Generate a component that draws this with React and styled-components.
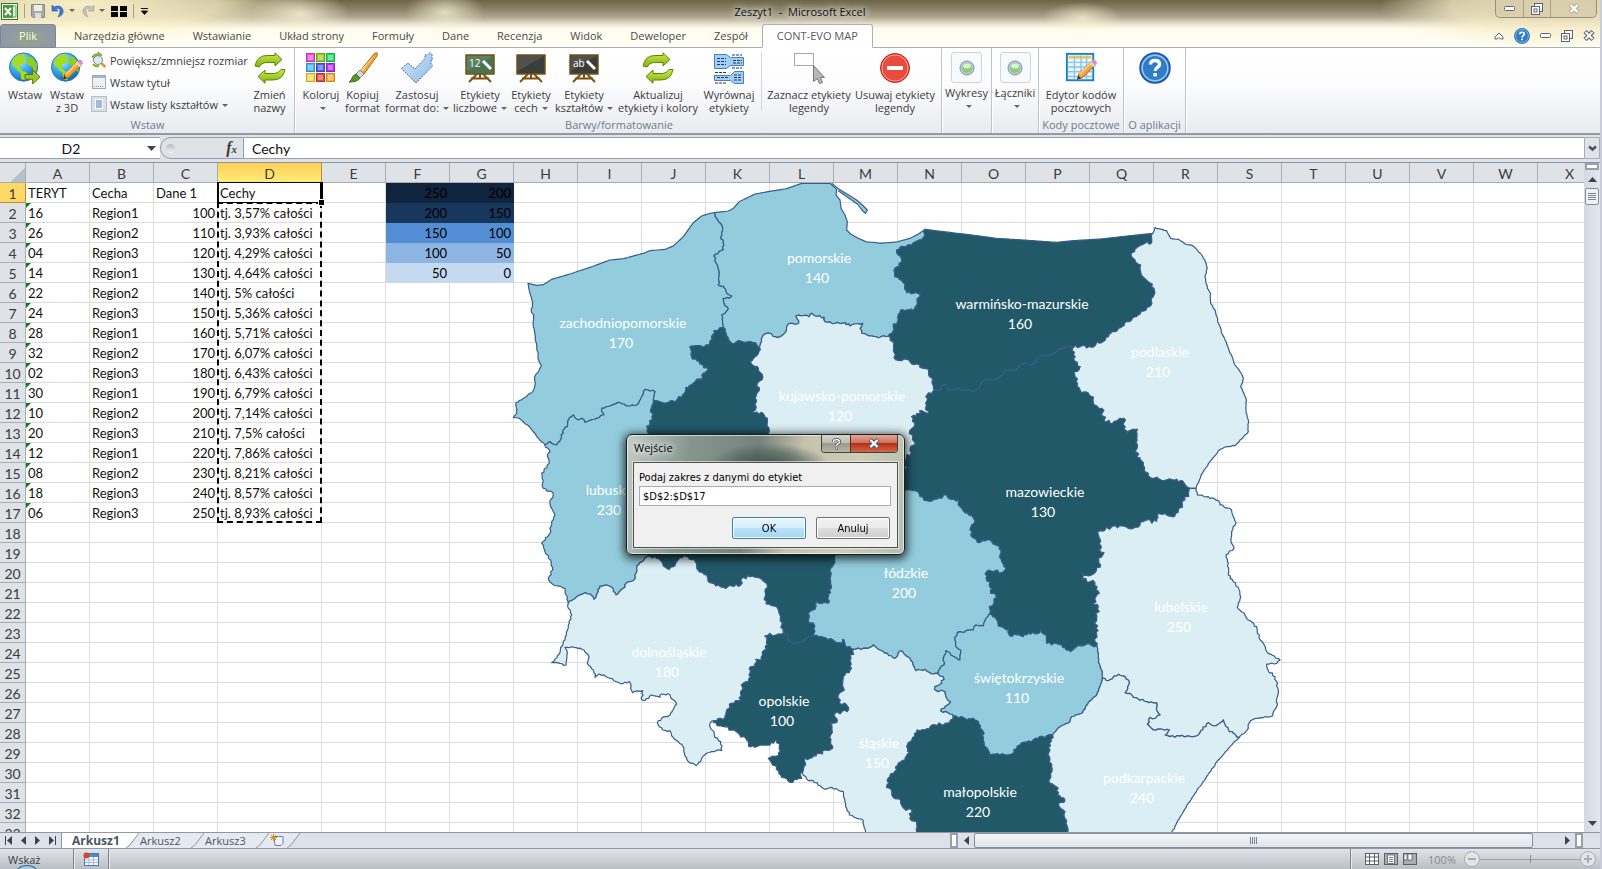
import React, { useState } from 'react';
import styled, { createGlobalStyle } from 'styled-components';

const GlobalStyle = createGlobalStyle`
  * {
    box-sizing: border-box;
  }

  body {
    margin: 0;
    overflow: hidden;
    font-family: 'Open Sans', 'Noto Sans', sans-serif;
    font-size: 11px;
    color: #3b3b3b;
  }

  button, input {
    font: inherit;
    color: inherit;
    margin: 0;
    padding: 0;
    border: 0;
    background: none;
  }
`;

const Window = styled.div`
  position: relative;
  display: flex;
  flex-direction: column;
  height: 100vh;
  overflow: hidden;
  border-right: 2px solid #c9cbd8;
  background: #dce1e8;
`;

/* ---------- title bar and tabs ---------- */

const Glass = styled.header`
  background:
    radial-gradient(ellipse 230px 40px at 80px 4px, rgba(255, 246, 205, 0.95), rgba(255, 246, 205, 0.7) 60%, transparent),
    radial-gradient(ellipse 50px 22px at 300px 14px, rgba(255, 247, 218, 0.8), transparent),
    radial-gradient(ellipse 40px 22px at 445px 12px, rgba(255, 250, 225, 0.7), transparent),
    radial-gradient(ellipse 40px 16px at 1082px 18px, rgba(255, 247, 215, 0.7), transparent),
    radial-gradient(ellipse 180px 44px at 1560px 6px, rgba(238, 226, 184, 0.95), rgba(246, 236, 200, 0.75) 60%, transparent),
    linear-gradient(#6d6548, #8c8469 20%, #aba58f 35%, #e8e2cb 50%, #fffbee 60%, #fffff6);
`;

const TitleBar = styled.div`
  display: grid;
  grid-template-columns: 1fr auto 1fr;
  height: 24px;
`;

const QuickAccess = styled.div`
  display: flex;
  align-items: center;
  gap: 6px;
  padding: 0 0 2px 1px;
`;

const QuickButton = styled.button`
  display: flex;
  align-items: center;
`;

const QuickDivider = styled.span`
  width: 1px;
  height: 14px;
  background: #a5a08c;
`;

const WindowTitle = styled.h1`
  margin: 0;
  font-size: 11px;
  font-weight: 400;
  line-height: 24px;
  color: #111;
  white-space: pre;
  text-shadow: 0 0 6px #fff, 0 0 8px #fff;
`;

const CaptionButtons = styled.div`
  display: flex;
  justify-self: end;
  height: 18px;
  margin-right: 3px;
  border: 1px solid #98907a;
  border-top: 0;
  border-radius: 0 0 5px 5px;
  background: rgba(214, 203, 170, 0.7);
`;

const CaptionButton = styled.button`
  display: flex;
  align-items: center;
  justify-content: center;
  width: ${(p) => (p.$wide ? '46px' : '27px')};

  & + & {
    border-left: 1px solid #a8a08a;
  }
`;

const TabRow = styled.div`
  display: flex;
  height: 24px;
  border-bottom: 1px solid #a9afb7;
`;

const FileTab = styled.button`
  width: 56px;
  height: 24px;
  margin-right: 4px;
  padding-bottom: 2px;
  border: 1px solid #7d8795;
  border-radius: 3px 3px 0 0;
  background: radial-gradient(ellipse at 50% 60%, #9ba78f, #8f9aa4 60%, #8e98a8);
  color: #fff;
  text-shadow: 0 0 4px #6f9a2c;
`;

const Tab = styled.button`
  height: 24px;
  padding: 0 14px 2px;
  color: #4a4a4a;
  white-space: nowrap;
  ${(p) => p.$active && `
    border: 1px solid #a9afb7;
    border-bottom-color: #fff;
    border-radius: 3px 3px 0 0;
    background: #fff;
    color: #555b64;
  `}
`;

const TabTools = styled.div`
  display: flex;
  align-items: center;
  gap: 10px;
  margin-left: auto;
  padding-right: 5px;
`;

/* ---------- ribbon ---------- */

const Ribbon = styled.section`
  display: flex;
  height: 87px;
  background: linear-gradient(#fff, #fdfdfe 40%, #e8ebef);
  border-bottom: 2px solid #949aa1;
`;

const Group = styled.div`
  display: flex;
  flex-direction: column;
  padding: ${(p) => p.$pad || '0'};
  border-right: 1px solid #c0c4c9;
  box-shadow: 1px 0 0 #fff;
`;

const GroupBody = styled.div`
  display: flex;
  flex: 1;
  padding-top: 4px;
`;

const GroupName = styled.div`
  height: 17px;
  line-height: 17px;
  text-align: center;
  white-space: nowrap;
  color: #727b89;
`;

const GroupSplit = styled.span`
  width: 1px;
  height: 58px;
  margin: 0 4px;
  background: #d3d7dc;
`;

const BigButton = styled.button`
  display: flex;
  flex-direction: column;
  align-items: center;
  gap: ${(p) => (p.$boxed ? '3px' : '4px')};
  width: ${(p) => p.$w}px;
  line-height: 13px;
  white-space: nowrap;
  text-align: center;
`;

const ButtonText = styled.span`
  display: block;
`;

const SmallColumn = styled.div`
  display: flex;
  flex-direction: column;
  width: 160px;
  margin-top: -3px;
`;

const SmallButton = styled.button`
  display: flex;
  align-items: center;
  gap: 3px;
  height: 22px;
  padding-left: 3px;
  white-space: nowrap;
`;

const Caret = styled.i`
  display: inline-block;
  margin: 0 0 2px 4px;
  border: 3px solid transparent;
  border-top-color: #666;
  border-bottom: 0;
`;

const IconBox = styled.span`
  display: flex;
  align-items: center;
  justify-content: center;
  width: 31px;
  height: 31px;
  border: 1px solid #d0d4d8;
  border-radius: 3px;
  background: #f8f9fb;
`;

/* ---------- formula bar ---------- */

const FormulaBar = styled.div`
  display: flex;
  height: 28px;
  padding: 2px 0 3px;
  background: #dce3ec;
  border-bottom: 1px solid #8f959c;
`;

const NameBox = styled.input`
  width: 142px;
  height: 22px;
  border: 1px solid #979da4;
  border-width: 1px 0;
  background: #fff;
  font-family: Lato, sans-serif;
  font-size: 14px;
  text-align: center;
  color: #111;
`;

const NameArrow = styled.button`
  width: 18px;
  height: 22px;
  border: 1px solid #979da4;
  border-width: 1px 0;
  background: #fff;
`;

const FunctionArea = styled.div`
  display: flex;
  align-items: center;
  justify-content: space-between;
  width: 84px;
  height: 22px;
  padding: 0 6px 0 5px;
  border: 1px solid #979da4;
  border-radius: 11px 0 0 11px;
  background: #dfe3e8;
`;

const Knob = styled.span`
  width: 9px;
  height: 9px;
  border-radius: 50%;
  background: linear-gradient(#b5b9be, #f2f3f5);
`;

const FxButton = styled.button`
  font-family: 'Liberation Serif', serif;
  font-size: 16px;
  font-style: italic;
  font-weight: 700;
  line-height: 16px;

  small {
    font-size: 11px;
  }
`;

const FormulaInput = styled.input`
  flex: 1;
  height: 22px;
  padding-left: 8px;
  border: 1px solid #979da4;
  border-width: 1px 0;
  background: #fff;
  font-family: Lato, sans-serif;
  font-size: 14px;
  color: #111;
`;

const ExpandButton = styled.button`
  display: flex;
  align-items: center;
  justify-content: center;
  width: 16px;
  height: 22px;
  border: 1px solid #a9afb5;
  background: #dfe3e8;
`;

/* ---------- sheet ---------- */

const Workspace = styled.main`
  display: flex;
  flex: 1;
  min-height: 0;
`;

const Viewport = styled.div`
  position: relative;
  flex: 1;
  overflow: hidden;
  background: #fff;
`;

const Grid = styled.table`
  width: 1602px;
  table-layout: fixed;
  border-collapse: separate;
  border-spacing: 0;
  font-family: Lato, sans-serif;
  font-size: 13px;
  line-height: 17px;
  color: #111;

  th, td {
    height: 20px;
    padding: 2px 2px 0;
    white-space: nowrap;
    border: 0 solid #dadcdd;
    border-width: 0 1px 1px 0;
  }
`;

const ColHead = styled.th`
  && {
    border-color: ${(p) => (p.$active ? '#c28a30' : '#a8adb4')};
  }
  background: ${(p) => (p.$active ? 'linear-gradient(#ffcf57, #ffec78)' : '#dfe3e8')};
  font-size: 14px;
  font-weight: 400;
  color: #3b3b3b;
`;

const RowHead = styled(ColHead)`
  background: ${(p) => (p.$active ? '#ffd966' : '#dfe3e8')};
`;

const Corner = styled(ColHead)`
  background: linear-gradient(135deg, #dfe3e8 66%, #b9bfc6 66%);
`;

const Cell = styled.td`
  position: relative;
  text-align: ${(p) => (p.$right ? 'right' : 'left')};

  ${(p) => p.$fill && `
    && { border-color: ${p.$fill}; }
    background: ${p.$fill};
    color: #000;
  `}

  ${(p) => p.$flag && `
    &::before {
      content: '';
      position: absolute;
      top: 0;
      left: 0;
      border: 5px solid #0a7d1c;
      border-width: 5px 5px 0 0;
      border-right-color: transparent;
    }
  `}
`;

const ActiveCell = styled.div`
  position: absolute;
  left: 217px;
  top: 19px;
  width: 106px;
  height: 21px;
  border: solid #000;
  border-width: 1px 3px 1px 2px;

  &::after {
    content: '';
    position: absolute;
    right: -4px;
    bottom: -3px;
    width: 5px;
    height: 5px;
    background: #000;
    outline: 1px solid #fff;
  }
`;

const CopyRange = styled.div`
  position: absolute;
  left: 217px;
  top: 39px;
  width: 105px;
  height: 321px;
  border: 2px dashed #000;
`;

const MapLayer = styled.svg`
  position: absolute;
  left: 500px;
  top: 20px;
  font-family: Lato, sans-serif;
  font-size: 14px;
`;

const VerticalBar = styled.div`
  display: flex;
  flex-direction: column;
  align-items: center;
  width: 16px;
  background: linear-gradient(90deg, #d3d9e4, #e3e7ee);
`;

const SplitGrip = styled.span`
  width: ${(p) => (p.$upright ? '8px' : '14px')};
  height: ${(p) => (p.$upright ? '15px' : '7px')};
  border: 2px solid #9a9fa8;
  background: #fff;
`;

const ArrowButton = styled.button`
  display: flex;
  align-items: center;
  justify-content: center;
  width: 16px;
  height: 18px;
  ${(p) => p.$bottom && 'margin-top: auto;'}
`;

const VerticalThumb = styled.button`
  display: flex;
  align-items: center;
  justify-content: center;
  width: 14px;
  height: 17px;
  border: 1px solid #868e99;
  border-radius: 2px;
  background: #eef1f6;
`;

/* ---------- bottom bars ---------- */

const SheetBar = styled.nav`
  display: flex;
  height: 17px;
  border-top: 1px solid #8f98a4;
  border-bottom: 1px solid #8f98a4;
  background: #dce1ea;
`;

const NavButtons = styled.div`
  display: flex;
  align-items: center;
  justify-content: space-between;
  width: 62px;
  padding: 0 5px;
  border-right: 1px solid #8f98a4;
`;

const SheetTab = styled.button`
  width: ${(p) => (p.$active ? '64px' : '51px')};
  padding-left: ${(p) => (p.$active ? '10px' : '0')};
  background: ${(p) => (p.$active ? '#fff' : '#e6eaf0')};
  font-size: ${(p) => (p.$active ? '12px' : '11px')};
  font-weight: ${(p) => (p.$active ? 700 : 400)};
  line-height: 15px;
  text-align: left;
  color: #4b5563;
`;

const NewSheet = styled.button`
  display: flex;
  align-items: center;
  width: 17px;
  background: #e6eaf0;
`;

const HorizontalBar = styled.div`
  display: flex;
  flex: 0 1 650px;
  align-items: center;
  margin-left: auto;
  padding-right: 17px;
`;

const HorizontalThumb = styled.button`
  display: flex;
  align-items: center;
  justify-content: center;
  flex: 1;
  height: 15px;
  border: 1px solid #868e99;
  border-radius: 2px;
  background: linear-gradient(#f3f5f8, #dfe3ea);
`;

const HorizontalRest = styled.span`
  width: 26px;
`;

const StatusBar = styled.footer`
  position: relative;
  display: flex;
  align-items: center;
  height: 20px;
  padding: 0 4px 0 8px;
  background: linear-gradient(#e1e4e8, #babfc5);
`;

const StatusDivider = styled.span`
  width: 1px;
  height: 20px;
  margin: 0 9px;
  background: #7e848b;
  box-shadow: 1px 0 0 #e8eaed;
`;

const StatusText = styled.span`
  width: 56px;
`;

const StatusRight = styled.div`
  display: flex;
  align-items: center;
  gap: 5px;
  margin-left: auto;
`;

const Percent = styled.span`
  margin: 0 3px 0 6px;
  color: #868b91;
`;

const RoundButton = styled.button`
  display: flex;
  align-items: center;
  justify-content: center;
  width: 16px;
  height: 16px;
  border: 1px solid #a9adb2;
  border-radius: 50%;
  background: #e2e4e7;
`;

const ZoomControl = styled.div`
  display: flex;
  align-items: center;
`;

const ZoomSlider = styled.input`
  appearance: none;
  width: 100px;
  height: 16px;
  background: linear-gradient(#9aa1aa, #9aa1aa) center / 100% 1px no-repeat;

  &::-webkit-slider-thumb {
    appearance: none;
    width: 1px;
    height: 8px;
    background: #8a919b;
  }
`;

const StartOrb = styled.span`
  position: absolute;
  left: 14px;
  bottom: -18px;
  width: 26px;
  height: 22px;
  border: 1px solid #2f6f93;
  border-radius: 50%;
  background: #a9cfe0;
`;

/* ---------- dialog ---------- */

const Dialog = styled.form`
  position: absolute;
  left: 626px;
  top: 434px;
  width: 279px;
  padding: 0 6px 6px;
  border: 1px solid #1b1f1e;
  border-radius: 6px;
  background:
    radial-gradient(ellipse 60px 22px at 142px 30px, #40524d, rgba(74, 92, 87, 0.6) 60%, transparent),
    linear-gradient(100deg, #c3cdc6, #87958f 22%, #75837d 45%, #c5c3ac 60%, #cfcdb8 80%, #b5beb0);
  box-shadow: inset 0 0 0 1px rgba(255, 255, 255, 0.6), 0 2px 10px 2px rgba(0, 0, 0, 0.75);
  font-family: 'DejaVu Sans Condensed', 'DejaVu Sans', sans-serif;
  font-size: 11px;
  color: #000;
`;

const DialogTitle = styled.div`
  display: flex;
  justify-content: space-between;
  height: 27px;
  line-height: 25px;
  padding-left: 1px;
  font-family: 'Open Sans', sans-serif;
  text-shadow: 0 0 6px #fff, 0 0 8px #fff;
`;

const DialogCaption = styled.div`
  display: flex;
  height: 18px;
  border: 1px solid #3e4541;
  border-top: 0;
  border-radius: 0 0 4px 4px;
  overflow: hidden;
`;

const DialogCaptionButton = styled.button`
  display: flex;
  align-items: center;
  justify-content: center;
  width: ${(p) => (p.$close ? '47px' : '28px')};
  border-left: ${(p) => (p.$close ? '1px solid #5a2a22' : '0')};
  background: ${(p) => (p.$close
    ? 'linear-gradient(#e2a595, #cf6f5c 48%, #b82f17 50%, #d0664a)'
    : 'linear-gradient(#d5d5c8, #bcbcae 48%, #9b9b8b 50%, #b7b6a4)')};
`;

const DialogBody = styled.div`
  padding: 8px 6px 8px 5px;
  border: 1px solid #4c5451;
  outline: 1px solid rgba(255, 255, 255, 0.55);
  background: #f0f0f0;
`;

const DialogLabel = styled.label`
  display: block;
  line-height: 14px;
  margin-bottom: 1px;
`;

const DialogInput = styled.input`
  width: 100%;
  height: 20px;
  padding-left: 3px;
  border: 1px solid #abadb3;
  background: #fff;
  outline: none;
`;

const DialogActions = styled.div`
  display: flex;
  justify-content: flex-end;
  gap: 10px;
  margin-top: 11px;
  padding-right: 1px;
`;

const DialogButton = styled.button`
  width: 74px;
  height: 22px;
  border: 1px solid ${(p) => (p.$primary ? '#3c7fb1' : '#707070')};
  border-radius: 2px;
  box-shadow: inset 0 0 0 1px #fbfdff;
  background: ${(p) => (p.$primary
    ? 'linear-gradient(#e9f6fd, #d5eefc 48%, #b8e2f9 50%, #a2d6f4)'
    : 'linear-gradient(#f2f2f2, #ebebeb 48%, #dddddd 50%, #cfcfcf)')};
`;

/* ---------- icons ---------- */

const Pencil = () => (
  <g>
    <path d="M13 29l2-6 13-13 4 4-13 13z" fill="#f7a032" stroke="#a8631a" />
    <path d="M15 23l13-13 1.5 1.5-13 13z" fill="#ffd08a" />
    <path d="M26 12l3-3 4 4-3 3z" fill="#d6d6d6" />
    <path d="M28 10l2-2q3 0 4 4l-2 2z" fill="#e08ab8" />
    <path d="M13 29l1-4 3 3z" fill="#333" />
  </g>
);

const GlobeIcon = ({ pencil }) => (
  <svg width="32" height="32" viewBox="0 0 34 34">
    <defs>
      <radialGradient id="sea" cx="35%" cy="25%" r="80%">
        <stop offset="0" stopColor="#c9f0ff" />
        <stop offset=".45" stopColor="#42b4ee" />
        <stop offset="1" stopColor="#0f62b4" />
      </radialGradient>
    </defs>
    <circle cx="15.500" cy="16" r="15" fill="url(#sea)" stroke="#2a78bd" />
    <path d="M3 11Q6 3 14 2l3 2-1 3 3 1-3 4-4 1-1 4 3 2-1 3-4-2-2-4-3-1z" fill="#a5dd1c" />
    <path d="M18 4l7 2 5 7-1 8-3-1-1-4-4-2-3-3 3-3z" fill="#8fd01a" />
    <path d="M12 20l6 1 2 3-3 6-4-1z" fill="#a5dd1c" />
    {pencil ? <Pencil /> : <path d="M17 24h8v-5l8 7.500-8 7.500v-5h-8z" fill="#9cc928" stroke="#54760f" />}
  </svg>
);

const SyncIcon = () => (
  <svg width="32" height="32" viewBox="0 0 32 32">
    <defs>
      <linearGradient id="leaf" x1="0" y1="0" x2="0" y2="1">
        <stop offset="0" stopColor="#cdea4a" />
        <stop offset="1" stopColor="#7fb20d" />
      </linearGradient>
    </defs>
    <g fill="url(#leaf)" stroke="#5b8209" strokeLinejoin="round">
      <path d="M1 14Q3 3 14 3.500h7V.8l7 6.700-7 6.500v-3.500h-7Q8 10 5 15z" />
      <path d="M31 17.500Q29 28.500 18 28h-7v3.200l-7-6.700 7-6.500v3.500h7q6 .5 9-4z" />
    </g>
  </svg>
);

const swatches = ['#f04fd8', '#8fd01a', '#22dd66', '#4ab6ff', '#4a63e8', '#b433f5', '#ffd84a', '#e8483a', '#ffac33'];

const SwatchIcon = () => (
  <svg width="32" height="32" viewBox="0 0 32 32">
    {swatches.map((c, i) => (
      <g key={c}>
        <rect x={1.5 + (i % 3) * 10} y={1.5 + Math.floor(i / 3) * 10} width="8" height="8" fill={c} stroke={c} />
        <rect x={1.5 + (i % 3) * 10} y={1.5 + Math.floor(i / 3) * 10} width="8" height="8" fill="none" stroke="#000" strokeOpacity=".22" />
        <rect x={3 + (i % 3) * 10} y={3 + Math.floor(i / 3) * 10} width="5" height="5" fill="#fff" fillOpacity=".35" />
      </g>
    ))}
  </svg>
);

const BrushIcon = () => (
  <svg width="32" height="32" viewBox="0 0 32 32">
    <path d="M30 1q1 1 0 3L17 22l-4-3L27 2q2-2 3-1z" fill="#f7a136" stroke="#b26a1b" />
    <path d="M28 3L14 18l1.500 1z" fill="#ffdca6" />
    <path d="M13 18l4 4-4 4-4-4z" fill="#d9d9d9" stroke="#888" />
    <path d="M9 22l4 4q-2 4-11 4 3-2 3-4 1-3 4-4z" fill="#5d9430" stroke="#3d6a18" />
  </svg>
);

const TickIcon = () => (
  <svg width="32" height="32" viewBox="0 0 32 32">
    <defs>
      <linearGradient id="tick" x1="0" y1="0" x2="1" y2="1">
        <stop offset="0" stopColor="#d3e7f8" />
        <stop offset="1" stopColor="#8dbbe6" />
      </linearGradient>
    </defs>
    <path d="M.5 16.500L7 11l7 6L24 6.500V2.500l2 1L29 .5l2 2v4l2 1-3 1v3l2 2L15 31z" fill="url(#tick)" stroke="#3f6ea3" strokeDasharray="2 1" />
  </svg>
);

const BoardIcon = ({ text, green }) => (
  <svg width="32" height="32" viewBox="0 0 32 32">
    <path d="M13 22L5 30M19 22l8 8M7 26.500h18M16 22v5" stroke="#7a5212" strokeWidth="2" fill="none" />
    <rect x="2" y="3" width="28" height="19" fill={green ? '#4a7351' : '#3b3d3c'} stroke="#7a5212" strokeWidth="1.500" />
    <path d="M3 4h26L3 19z" fill="#fff" fillOpacity=".1" />
    {text && <path d="M19 9l8 8" stroke="#fff" strokeWidth="3" />}
    {text && <text x="5" y="15" fontSize="10" fill="#fff">{text}</text>}
  </svg>
);

const AlignIcon = () => (
  <svg width="32" height="32" viewBox="0 0 32 32">
    <g fill="#9fd0f5" stroke="#4681b5">
      <path d="M1.500 2.500h12l4 3h13v8h-13l-4 3h-12z" />
      <path d="M30.500 19.500h-9l-4 4h-16v5h16l4 3h9z" />
    </g>
    <path d="M4 6.500h9M4 9.500h9M4 12.500h9M20 8.500h9M20 11h9M19 3h10M2 20.500h12M2 31h12M4 25.500h12M21 23h8M21 25.500h8M21 28h8M19 16h10" stroke="#335" strokeDasharray="3 1" fill="none" />
  </svg>
);

const CursorIcon = () => (
  <svg width="32" height="32" viewBox="0 0 32 32">
    <rect x="1.500" y="1.500" width="19" height="12" fill="none" stroke="#555" strokeDasharray="1 1" />
    <path d="M20.500 13.500v16l4-3 2 5 3-1-2-5h4z" fill="#b5b8bd" stroke="#72767c" />
  </svg>
);

const MinusIcon = () => (
  <svg width="32" height="32" viewBox="0 0 32 32">
    <circle cx="16" cy="16" r="14.500" fill="#e84c3d" stroke="#b32b1f" />
    <circle cx="16" cy="16" r="13" fill="none" stroke="#ff9a8c" />
    <rect x="8" y="14" width="16" height="4" rx="1" fill="#fff" />
  </svg>
);

const BallIcon = () => (
  <svg width="16" height="16" viewBox="0 0 16 16">
    <circle cx="8" cy="8" r="7" fill="#b8c9dc" stroke="#7d94b5" />
    <circle cx="8" cy="8" r="5" fill="#8ecb6f" />
    <ellipse cx="8" cy="6" rx="4" ry="2.500" fill="#d9f3cb" />
  </svg>
);

const TablePencilIcon = () => (
  <svg width="32" height="32" viewBox="0 0 34 34">
    <rect x="2" y="2" width="28" height="28" fill="#eaf7ff" stroke="#1584c0" strokeWidth="2" />
    <rect x="4" y="4" width="24" height="3" fill="#f9c04b" />
    <path d="M3 11h26M3 16h26M3 21h26M3 26h26M10 4v25M17 4v25M23 4v25" stroke="#8fc3e4" strokeWidth="1.500" />
    <Pencil />
  </svg>
);

const HelpIcon = ({ size = 32 }) => (
  <svg width={size} height={size} viewBox="0 0 32 32">
    <circle cx="16" cy="16" r="15" fill="#2f7cc9" stroke="#1a56a5" strokeWidth="1.500" />
    <circle cx="16" cy="16" r="12.800" fill="none" stroke="#9cc8f2" strokeWidth="1.500" />
    <path d="M11.500 12.500q0-4 4.500-4t4.500 3.700q0 2-2.300 3.500-2 1.300-2 3.300" fill="none" stroke="#fff" strokeWidth="3.400" />
    <rect x="14.300" y="21" width="3.600" height="3.600" rx="1" fill="#fff" />
  </svg>
);

const ZoomShapeIcon = () => (
  <svg width="16" height="16" viewBox="0 0 16 16">
    <path d="M1 5q2-4 6-3V0l4 3-4 3V4Q4 4 3 6z" fill="#8fbf2a" stroke="#5b8209" strokeWidth=".6" />
    <circle cx="7" cy="8" r="4.500" fill="#cfe6f7" fillOpacity=".8" stroke="#7f8a94" />
    <path d="M10 11l4.500 4" stroke="#e0952c" strokeWidth="2.500" />
    <path d="M2 12q2 3 6 2" stroke="#7fb20d" strokeWidth="2" fill="none" />
  </svg>
);

const TitleIcon = () => (
  <svg width="16" height="16" viewBox="0 0 16 16">
    <rect x="1.500" y="1.500" width="13" height="13" fill="#eef0f2" stroke="#a4a9ae" />
    <rect x="2" y="2" width="12" height="2" fill="#9fb8d0" />
    <path d="M3 12.500h10" stroke="#8d9297" strokeDasharray="1 1" />
  </svg>
);

const ShapeListIcon = () => (
  <svg width="16" height="16" viewBox="0 0 16 16">
    <rect x=".5" y=".5" width="15" height="15" fill="#d4dfea" stroke="#b6c1cc" />
    <rect x="4.500" y="3.500" width="7" height="9" fill="#a9bccf" stroke="#fff" />
  </svg>
);

const ExcelIcon = () => (
  <svg width="17" height="17" viewBox="0 0 17 17">
    <rect x=".5" y=".5" width="16" height="16" fill="#fff" stroke="#2f7a2f" />
    <path d="M11 3h4v11h-4" fill="#dff0da" stroke="#5f9f58" />
    <rect x="2" y="2" width="10" height="13" fill="#4d9b3f" />
    <path d="M4 5l6 7M10 5l-6 7" stroke="#fff" strokeWidth="2" />
  </svg>
);

const SaveIcon = () => (
  <svg width="14" height="14" viewBox="0 0 14 14">
    <path d="M.5.500h13v13H2l-1.500-1.500z" fill="#a9a9a6" stroke="#8a8a88" />
    <rect x="3" y="1" width="8" height="6" fill="#eee" />
    <rect x="4" y="9" width="6" height="5" fill="#ddd" />
  </svg>
);

const UndoIcon = ({ flip }) => (
  <svg width="14" height="14" viewBox="0 0 14 14">
    <path
      d={flip ? 'M13 1v6H7l2-2Q5 3 5 7q0 3 2 6Q1 11 2 6q2-6 9-3z' : 'M1 1v6h6L5 5q4-2 4 2 0 3-2 6 6-2 5-7-2-6-9-3z'}
      fill={flip ? '#c2c2bd' : '#3f77d4'}
      stroke={flip ? '#a3a39d' : '#2355a8'}
      strokeWidth=".6"
    />
  </svg>
);

const SplitIcon = () => (
  <svg width="16" height="13" viewBox="0 0 16 13">
    <path d="M0 1h7v5H0zM9 1h7v5H9zM0 7h7v5H0zM9 7h7v5H9z" fill="#000" />
  </svg>
);

const CustomizeIcon = () => (
  <svg width="9" height="9" viewBox="0 0 9 9">
    <path d="M1 1.500h7M1.500 4h6L4.500 7.500z" fill="#111" stroke="#111" />
  </svg>
);

const MinIcon = () => (
  <svg width="11" height="6" viewBox="0 0 11 6">
    <rect x=".5" y=".5" width="10" height="4" rx="1" fill="#fff" stroke="#5c6470" />
  </svg>
);

const RestoreIcon = () => (
  <svg width="12" height="12" viewBox="0 0 12 12">
    <rect x="3.500" y=".5" width="8" height="8" fill="#fff" stroke="#5c6470" />
    <rect x=".5" y="3.500" width="8" height="8" fill="#fff" stroke="#5c6470" />
    <rect x="3" y="6" width="3" height="3" fill="#fff" stroke="#5c6470" />
  </svg>
);

const CloseIcon = ({ edge = '#5c6470' }) => (
  <svg width="12" height="11" viewBox="0 0 12 11">
    <path d="M2 1.500l8 8M10 1.500l-8 8" stroke={edge} strokeWidth="4.500" />
    <path d="M2.500 2l7 7M9.500 2l-7 7" stroke="#fff" strokeWidth="2.200" />
  </svg>
);

const CollapseIcon = () => (
  <svg width="10" height="8" viewBox="0 0 10 8">
    <path d="M1 5l4-4 4 4v2H6.500L5 5.500 3.500 7H1z" fill="#fff" stroke="#5c6470" />
  </svg>
);

const ChevronIcon = () => (
  <svg width="9" height="7" viewBox="0 0 9 7">
    <path d="M1 1.500l3.500 3 3.500-3" fill="none" stroke="#4b5058" strokeWidth="2.500" />
  </svg>
);

const Triangle = ({ dir = 'down', bar }) => {
  const paths = {
    down: 'M0 2h9l-4.500 5z',
    up: 'M0 7h9L4.500 2z',
    left: 'M7 0v9L2 4.500z',
    right: 'M2 0v9l5-4.500z',
  };
  return (
    <svg width="9" height="9" viewBox="0 0 9 9">
      <path d={paths[dir]} fill="#3f444b" />
      {bar && <path d={dir === 'left' ? 'M.5 0v9' : 'M8.500 0v9'} stroke="#3f444b" />}
    </svg>
  );
};

const SlashEdge = ({ from, to }) => (
  <svg width="14" height="15" viewBox="0 0 14 15">
    <path d="M0 0h13L0 15z" fill={from} />
    <path d="M13 0h1v15H0z" fill={to} />
    <path d="M0 15L4 12 13 0" stroke="#8f98a4" fill="none" />
  </svg>
);

const NewSheetIcon = () => (
  <svg width="14" height="13" viewBox="0 0 14 13">
    <path d="M4 2.500h9v7l-2 2H5z" fill="#eef2fb" stroke="#6a7fa8" />
    <path d="M3.500 0v7M0 3.500h7M1 1l5 5M6 1L1 6" stroke="#d98c1a" />
  </svg>
);

const MacroIcon = () => (
  <svg width="16" height="14" viewBox="0 0 16 14">
    <rect x="1.500" y="1.500" width="14" height="12" fill="#fff" stroke="#4a74b8" />
    <rect x="2" y="2" width="13" height="3" fill="#4f83d8" />
    <path d="M2 8h13M2 10.500h13M6 5v8M10.500 5v8" stroke="#9db7df" />
    <circle cx="3.500" cy="3.500" r="3" fill="#d8452c" />
  </svg>
);

const ViewIcon = ({ kind }) => (
  <svg width="14" height="12" viewBox="0 0 14 12">
    <rect x=".5" y=".5" width="13" height="11" fill={kind === 'grid' ? '#fff' : '#a8adb3'} stroke="#5c6168" />
    {kind === 'grid' && <path d="M1 4h12M1 8h12M4.500 1v10M9.500 1v10" stroke="#5c6168" />}
    {kind === 'page' && <path d="M3.500 2h7v8.500h-7zM5 4.500h4M5 6.500h4M5 8.500h4" fill="#fff" stroke="#5c6168" strokeWidth=".8" />}
    {kind === 'break' && <path d="M1 1h3v6H1zM5 1h4v6H5z" fill="#fff" stroke="#5c6168" strokeWidth=".8" />}
  </svg>
);

/* ---------- map ---------- */

// Borders are stored once, in thirds of a pixel, relative to the tile they start in.
const tiles = { a: [0, 0], b: [1170, 0], c: [0, 1020], d: [1170, 1020] };

const trace = (source) => {
  const points = [];
  let tile = tiles.a;
  source.split(' ').forEach((token) => {
    if (tiles[token]) {
      tile = tiles[token];
      return;
    }
    const [x, y] = token.split(',').map(Number);
    points.push([x + tile[0], y + tile[1]]);
  });
  return points;
};

// Breaks long segments into small steps so administrative borders look ragged.
const roughen = (points, amount) => {
  const out = [points[0]];
  for (let i = 1; i < points.length; i += 1) {
    const [x0, y0] = points[i - 1];
    const [x1, y1] = points[i];
    const length = Math.hypot(x1 - x0, y1 - y0);
    const steps = Math.max(1, Math.round(length / 7));
    for (let s = 1; s < steps; s += 1) {
      const t = s / steps;
      const noise = Math.sin((x0 + s * 17) * 12.9898 + (y0 + s * 5) * 78.233) * 43758.5453;
      const shift = (noise - Math.floor(noise) - 0.5) * 3 * amount;
      out.push([
        x0 + (x1 - x0) * t - ((y1 - y0) / length) * shift,
        y0 + (y1 - y0) * t + ((x1 - x0) / length) * shift,
      ]);
    }
    out.push([x1, y1]);
  }
  return out;
};

const borders = {
  zachCoast: [0, 'a 54,370 80,376 100,374 125,358 180,342 240,322 300,300 340,296 400,280 420,272 465,268 490,258 520,230 550,188 575,168 600,160 613,158'],
  zachWest: [1, 'a 105,855 85,835 62,805 40,785 28,775 10,772 20,760 18,728 40,715 68,695 76,670 74,650 94,618 86,600 80,555 76,530 70,500 72,465 64,455 68,425 60,400 54,370'],
  pomCoast: [0, 'a 613,158 655,153 670,145 688,125 735,102 780,94 830,86 875,70 960,70 980,88 978,105 990,120 993,145 1005,165 1012,185 1010,210 1022,222 1045,235 1070,246 1092,247 1110,250 1160,246 1200,235 1225,222 1245,208'],
  pomWarm: [3, 'a 1245,208 1245,228 1215,246 1190,258 1160,270 1165,285 1175,298 1168,318 1155,325 1155,350 1185,372 1190,398 1210,400 1230,402 1222,425 1210,452 1190,450 1172,450 1165,480 1150,500 1150,512 1135,528'],
  pomKuj: [2, 'a 1135,528 1110,532 1085,528 1055,520 1050,505 1058,490 1035,492 1020,498 1005,488 975,490 945,485 942,472 915,468 905,460 898,470 875,468 858,468 866,482 862,492 840,490 830,500 828,515 810,530 795,530 780,520 760,525 755,545 748,562'],
  pomWlkp: [2, 'a 748,562 735,548 715,545 695,545 685,542 672,552 660,545 648,520 640,502'],
  zachPom: [2, 'a 613,158 620,175 632,190 638,205 632,232 640,240 640,270 612,288 622,315 628,345 625,375 640,378 648,395 665,408 658,415 640,415 642,430 655,445 645,460 635,465 638,485 640,502'],
  zachWlkp: [3, 'a 640,502 625,510 612,512 600,550 585,560 540,560 545,590 570,612 595,630 580,640 575,658 560,658 545,675 528,682 518,705 500,722 465,730 435,722 430,720'],
  zachLub: [2, 'a 430,720 435,695 405,688 395,710 380,735 355,738 330,728 300,738 275,745 282,765 260,775 225,787 215,775 205,780 190,765 175,780 172,800 158,812 155,832 140,855 120,845 105,855'],
  lubWlkp: [3, 'a 430,720 425,740 425,770 420,790 410,798 415,820 400,900 380,1000 400,1100 c 415,168'],
  lubWest: [2, 'a 105,855 120,875 112,885 118,910 95,940 100,985 130,1000 120,1030 c 122,20 135,45 125,65 120,100 95,130 105,155 122,180 128,210 115,235 125,250 165,265 168,285 175,310'],
  lubDol: [2, 'c 175,310 200,290 225,278 240,282 252,298 265,275 270,258 290,255 305,262 318,285 345,262 350,248 372,240 380,205 390,188 410,170 415,168'],
  dolWlkp: [3, 'c 415,168 440,175 455,185 460,198 478,208 490,200 500,185 510,172 535,170 560,190 565,212 590,225 600,248 625,255 640,262 665,258 692,255 695,235 720,230 755,238 772,255 765,275 768,312 790,318 805,330 812,350 815,375 820,400'],
  wlkpOpol: [1, 'c 820,400 835,405 832,420 850,430 870,428 895,412 910,408'],
  wlkpLodz: [3, 'c 960,60 975,165 970,195 960,212 962,250 955,310 935,310 920,305 918,320 895,340 900,370 912,372 910,408'],
  kujWlkp: [3, 'a 748,562 745,580 720,605 745,625 758,650 745,665 740,680 748,690 735,715 738,740 728,755 760,762 772,775 775,820 800,950 c 960,60'],
  kujLodz: [3, 'c 960,60 a 1180,960'],
  kujWarm: [3, 'a 1135,528 1148,545 1150,570 1158,600 1175,602 1190,598 1205,612 1220,612 1230,622 1255,628 b 88,650 98,660 100,685 103,690'],
  kujMaz: [4, 'b 103,690 78,710 80,735 85,760 60,752 50,770 35,770 45,795 30,812 38,830 47,852 32,860 35,878 20,885 15,930 10,960'],
  mazLodz: [3, 'b 10,960 15,990 45,992 60,1010 80,1022 110,1018 125,1015 140,1005 155,1018 175,1020 180,1040 195,1058 220,1075 222,1090 d 210,90 222,115 240,128 270,120 298,140 300,165 305,185 318,205 305,218 285,212 260,215 258,235 270,245 272,280 288,285 282,305 268,320 268,342'],
  lodzSwiet: [2, 'd 268,342 258,355 250,378 228,375 220,390 172,398 165,420 168,440 182,450 180,480 158,468 138,452 130,475 132,495 120,505 115,522'],
  lodzSlask: [2, 'c 1030,448 1075,445 1090,435 1120,455 1155,475 1165,458 1175,453 d 8,455 30,475 48,512 75,508 95,522 115,522'],
  opolLodz: [3, 'c 910,408 940,412 975,425 995,430 998,418 1005,435 1030,448'],
  opolSlask: [4, 'c 1030,448 1020,480 1025,505 1000,530 998,550 1003,570 985,585 988,608 1010,615 1012,635 975,640 980,668 960,668 962,705 968,745 945,750 918,768 885,775 882,800 877,818'],
  dolOpol: [3, 'c 820,400 805,402 790,408 780,400 765,408 772,435 758,465 755,480 738,478 735,500 718,505 722,530 715,545 700,550 692,575 692,600 665,610 650,630 645,655 630,655 613,662'],
  dolSouth: [2, 'c 613,662 600,670 602,685 612,695 615,712 632,725 635,752 605,755 580,768 572,785 558,797 535,785 525,768 522,745 505,725 485,708 480,692 458,690 442,668 455,655 480,645 490,628 500,612 480,585 455,582 450,592 425,585 405,602 395,600 398,572 368,578 358,545 330,550 300,535 268,522 255,532 250,510 232,490 235,465 222,450 205,445 185,440 165,442 172,460 168,495 150,490 125,488 148,462 165,412 175,375 185,345 175,325 175,310'],
  opolSouth: [3, 'c 613,662 610,668 640,680 665,690 685,700 710,720 715,738 740,740 780,735 800,720 808,740 806,765 775,775 785,790 800,800 812,825 840,847 860,838 875,835 870,820 877,818'],
  slaskSouth: [2, 'c 877,818 895,842 910,842 935,862 945,868 965,862 1000,875 1005,905 1018,945 1040,955 1060,962 1068,1010'],
  slaskBottom: [0, 'c 1068,1010 1220,1010'],
  slaskMalo: [3, 'd 160,650 150,668 105,675 75,690 52,690 45,710 20,740 30,758 15,780 c 1165,790 1150,820 1135,835 1130,862 1145,870 1150,892 1172,900 1182,925 1205,930 1200,955 1220,965 1220,1010'],
  slaskSwiet: [3, 'd 115,522 130,530 125,550 105,560 110,572 135,575 138,590 152,605 135,620 122,632 150,642 160,650'],
  swietMalo: [3, 'd 160,650 185,650 200,660 220,655 235,665 240,685 252,700 250,720 262,745 270,765 300,765 335,762 360,735 400,720 440,708 458,705'],
  swietPodk: [1, 'd 458,705 480,680 510,665 515,650 548,638 565,608 590,585 600,560 607,535'],
  swietMaz: [3, 'd 268,342 285,352 295,378 325,388 330,408 350,405 370,410 385,398 410,402 422,388 438,405 440,430 485,435 512,455 530,440 560,432 590,438'],
  lubelSwiet: [1, 'd 590,438 595,460 595,485 607,515 607,535'],
  mazLubel: [4, 'b 868,985 865,1000 855,1020 835,1050 825,1068 800,1065 775,1060 770,1085 735,1082 700,1105 665,1098 d 640,78 600,92 595,105 602,125 598,150 612,158 595,175 602,195 580,222 565,228 545,218 548,238 585,248 598,280 580,310 595,320 590,355 588,385 590,438'],
  mazPodl: [4, 'b 513,560 525,590 525,605 540,620 522,635 528,665 540,692 565,700 580,712 582,735 605,745 612,780 630,790 655,780 672,775 675,800 680,822 700,808 712,808 710,835 712,860 708,878 730,910 732,935 745,948 770,952 800,960 830,958 855,975 868,985'],
  warmPodl: [3, 'b 758,220 755,248 735,250 705,268 693,285 705,300 722,315 722,335 745,365 762,385 760,410 748,440 715,465 695,480 680,485 655,505 625,530 605,548 590,545 575,562 545,558 513,560'],
  warmMaz: [2, 'b 103,690 118,692 125,680 138,675 148,690 180,688 200,692 230,690 240,675 260,655 280,660 300,650 315,630 345,632 360,618 375,608 395,618 420,590 450,585 475,570 495,562 513,560'],
  warmNorth: [0, 'b 75,208 130,215 200,223 290,235 370,240 440,245 470,247 520,242 600,237 680,228 758,220'],
  podlEast: [1, 'b 758,220 765,203 800,212 812,235 835,238 855,252 878,257 905,285 915,300 922,325 915,350 922,385 932,400 932,430 945,450 955,490 975,540 1005,615 1020,635 1030,655 1022,680 1038,715 1038,750 1045,780 1045,815 1005,857 980,860 955,872 930,905 910,935 898,960 888,985'],
  podlLubel: [0, 'b 868,985 888,985'],
  lubelEast: [2, 'b 888,985 892,1005 925,1010 955,1022 960,1035 990,1045 1000,1070 1008,1088 d 995,95 993,120 1002,145 978,165 985,190 985,225 1000,245 1015,262 1022,290 1012,322 1035,345 1045,360 1070,380 1072,400 1090,430 1105,460 1140,480 1130,490 1100,492 1105,512 1125,530 1135,570 1130,620 1118,648 1060,658 1048,668 1045,685 1017,713'],
  lubelPodk: [2, 'd 607,535 625,542 655,523 675,530 688,548 675,578 690,580 700,592 740,605 770,608 772,635 780,645 765,655 750,652 742,672 760,690 808,690 795,705 810,710 890,708 925,668 942,678 970,660 985,690 1000,700 1017,713'],
  podkEast: [1, 'd 1017,713 990,740 955,780 920,830 885,880 850,935 815,998 808,1010'],
  podkBottom: [0, 'd 808,1010 508,1010'],
  maloBottom: [0, 'd 508,1010 50,1010'],
  maloPodk: [3, 'd 458,705 448,730 448,770 455,800 450,850 475,865 472,885 495,900 475,915 495,935 498,970 508,1010'],
};

const lines = Object.fromEntries(
  Object.entries(borders).map(([name, [amount, source]]) => [name, roughen(trace(source), amount)])
);

const ringPath = (names) => {
  const points = names.split(' ').flatMap((name) => (
    name[0] === '-' ? [...lines[name.slice(1)]].reverse() : lines[name]
  ));
  return `M${points.map(([x, y]) => `${x.toFixed(1)},${y.toFixed(1)}`).join('L')}Z`;
};

const dark = '#215968';
const mid = '#93cddd';
const pale = '#dbeef4';

const regions = [
  { name: 'zachodniopomorskie', value: 170, x: 623, y: 328, fill: mid, ring: 'zachCoast zachPom zachWlkp zachLub zachWest' },
  { name: 'pomorskie', value: 140, x: 819, y: 263, fill: mid, ring: 'pomCoast pomWarm pomKuj pomWlkp -zachPom' },
  { name: 'warmińsko-mazurskie', value: 160, x: 1022, y: 309, fill: dark, ring: 'warmNorth warmPodl -warmMaz -kujWarm -pomWarm' },
  { name: 'podlaskie', value: 210, x: 1160, y: 357, fill: pale, ring: 'podlEast -podlLubel -mazPodl -warmPodl' },
  { name: 'kujawsko-pomorskie', value: 120, x: 842, y: 401, fill: pale, ring: '-pomKuj kujWarm kujMaz -kujLodz -kujWlkp' },
  { name: 'wielkopolskie', fill: dark, ring: '-pomWlkp kujWlkp wlkpLodz -wlkpOpol -dolWlkp -lubWlkp -zachWlkp' },
  { name: 'lubuskie', value: 230, x: 611, y: 495, fill: mid, ring: '-zachLub lubWlkp -lubDol -lubWest' },
  { name: 'mazowieckie', value: 130, x: 1045, y: 497, fill: dark, ring: 'warmMaz mazPodl mazLubel -swietMaz -mazLodz -kujMaz' },
  { name: 'łódzkie', value: 200, x: 906, y: 578, fill: mid, ring: 'kujLodz mazLodz lodzSwiet -lodzSlask -opolLodz -wlkpLodz' },
  { name: 'lubelskie', value: 250, x: 1181, y: 612, fill: pale, ring: 'podlLubel lubelEast -lubelPodk -lubelSwiet -mazLubel' },
  { name: 'dolnośląskie', value: 180, x: 669, y: 657, fill: pale, ring: 'lubDol dolWlkp dolOpol dolSouth' },
  { name: 'opolskie', value: 100, x: 784, y: 706, fill: dark, ring: 'wlkpOpol opolLodz opolSlask -opolSouth -dolOpol' },
  { name: 'śląskie', value: 150, x: 879, y: 748, fill: pale, ring: 'lodzSlask slaskSwiet slaskMalo -slaskBottom -slaskSouth -opolSlask' },
  { name: 'świętokrzyskie', value: 110, x: 1019, y: 683, fill: mid, ring: 'swietMaz lubelSwiet -swietPodk -swietMalo -slaskSwiet -lodzSwiet' },
  { name: 'małopolskie', value: 220, x: 980, y: 797, fill: dark, ring: 'swietMalo maloPodk maloBottom -slaskMalo' },
  { name: 'podkarpackie', value: 240, x: 1144, y: 783, fill: pale, ring: 'swietPodk lubelPodk podkEast podkBottom -maloPodk' },
];

const PolandMap = () => (
  <MapLayer width="800" height="660" viewBox="500 183 800 660" role="img" aria-label="Mapa">
    <g transform="translate(510 160) scale(.33333)" stroke="#385d8a" strokeWidth="3.600" strokeLinejoin="round">
      {regions.map((r) => <path key={r.name} d={ringPath(r.ring)} fill={r.fill} />)}
      <path d="M965 70L985 86L1040 120L1060 138L1072 150L1066 160L1056 150L1042 132L985 92" fill={mid} />
    </g>
    <g fill="#fff" textAnchor="middle">
      {regions.filter((r) => r.value).map((r) => (
        <g key={r.name}>
          <text x={r.x} y={r.y}>{r.name}</text>
          <text x={r.x - 2} y={r.y + 20}>{r.value}</text>
        </g>
      ))}
    </g>
  </MapLayer>
);

/* ---------- data ---------- */

const tabs = ['Narzędzia główne', 'Wstawianie', 'Układ strony', 'Formuły', 'Dane', 'Recenzja', 'Widok', 'Deweloper', 'Zespół', 'CONT-EVO MAP'];

const columns = 'ABCDEFGHIJKLMNOPQRSTUVWX'.split('');

const data = [
  ['16', 'Region1', 100, '3,57'],
  ['26', 'Region2', 110, '3,93'],
  ['04', 'Region3', 120, '4,29'],
  ['14', 'Region1', 130, '4,64'],
  ['22', 'Region2', 140, '5'],
  ['24', 'Region3', 150, '5,36'],
  ['28', 'Region1', 160, '5,71'],
  ['32', 'Region2', 170, '6,07'],
  ['02', 'Region3', 180, '6,43'],
  ['30', 'Region1', 190, '6,79'],
  ['10', 'Region2', 200, '7,14'],
  ['20', 'Region3', 210, '7,5'],
  ['12', 'Region1', 220, '7,86'],
  ['08', 'Region2', 230, '8,21'],
  ['18', 'Region3', 240, '8,57'],
  ['06', 'Region3', 250, '8,93'],
];

const legend = [
  [250, 200, '#10243e'],
  [200, 150, '#17375d'],
  [150, 100, '#538ed5'],
  [100, 50, '#8db4e3'],
  [50, 0, '#c5d9f1'],
];

const getCell = (row, col) => {
  if (row === 1 && 'ABCD'.includes(col)) {
    return { value: ['TERYT', 'Cecha', 'Dane 1', 'Cechy']['ABCD'.indexOf(col)] };
  }
  if (row <= 5 && (col === 'F' || col === 'G')) {
    const [from, to, fill] = legend[row - 1];
    return { value: col === 'F' ? from : to, fill, right: true };
  }
  const record = row > 1 && data[row - 2];
  if (!record) return {};
  if (col === 'A') return { value: record[0], flag: true };
  if (col === 'B') return { value: record[1] };
  if (col === 'C') return { value: record[2], right: true };
  if (col === 'D') return { value: `tj. ${record[3]}% całości` };
  return {};
};

const Big = ({ icon, lines: text, w, caret, boxed }) => (
  <BigButton type="button" $w={w} $boxed={boxed}>
    {boxed ? <IconBox>{icon}</IconBox> : icon}
    <ButtonText>
      {text[0]}
      {(text[1] || caret) && <br />}
      {text[1]}
      {caret && <Caret />}
    </ButtonText>
  </BigButton>
);

const App = () => {
  const [range, setRange] = useState('$D$2:$D$17');
  const [activeTab, setActiveTab] = useState('CONT-EVO MAP');

  return (
    <Window>
      <GlobalStyle />
      <Glass>
        <TitleBar>
          <QuickAccess>
            <ExcelIcon />
            <QuickDivider />
            <QuickButton aria-label="Zapisz"><SaveIcon /></QuickButton>
            <QuickButton aria-label="Cofnij"><UndoIcon /><Caret /></QuickButton>
            <QuickButton aria-label="Wykonaj ponownie"><UndoIcon flip /><Caret /></QuickButton>
            <QuickButton aria-label="Podziel"><SplitIcon /></QuickButton>
            <QuickDivider />
            <QuickButton aria-label="Dostosuj"><CustomizeIcon /></QuickButton>
          </QuickAccess>
          <WindowTitle>{'Zeszyt1  -  Microsoft Excel'}</WindowTitle>
          <CaptionButtons>
            <CaptionButton aria-label="Minimalizuj"><MinIcon /></CaptionButton>
            <CaptionButton aria-label="Przywróć"><RestoreIcon /></CaptionButton>
            <CaptionButton $wide aria-label="Zamknij"><CloseIcon edge="#b5ad98" /></CaptionButton>
          </CaptionButtons>
        </TitleBar>
        <TabRow>
          <FileTab>Plik</FileTab>
          {tabs.map((tab) => (
            <Tab key={tab} $active={tab === activeTab} onClick={() => setActiveTab(tab)}>{tab}</Tab>
          ))}
          <TabTools>
            <QuickButton aria-label="Zwiń wstążkę"><CollapseIcon /></QuickButton>
            <QuickButton aria-label="Pomoc"><HelpIcon size={16} /></QuickButton>
            <QuickButton aria-label="Minimalizuj okno"><MinIcon /></QuickButton>
            <QuickButton aria-label="Przywróć okno"><RestoreIcon /></QuickButton>
            <QuickButton aria-label="Zamknij okno"><CloseIcon /></QuickButton>
          </TabTools>
        </TabRow>
      </Glass>

      <Ribbon>
        <Group $pad="0 3px 0 4px">
          <GroupBody>
            <Big w={42} icon={<GlobeIcon />} lines={['Wstaw']} />
            <Big w={42} icon={<GlobeIcon pencil />} lines={['Wstaw', 'z 3D']} />
            <SmallColumn>
              <SmallButton><ZoomShapeIcon />Powiększ/zmniejsz rozmiar</SmallButton>
              <SmallButton><TitleIcon />Wstaw tytuł</SmallButton>
              <SmallButton><ShapeListIcon /><span>Wstaw listy kształtów<Caret /></span></SmallButton>
            </SmallColumn>
            <Big w={43} icon={<SyncIcon />} lines={['Zmień', 'nazwy']} />
          </GroupBody>
          <GroupName>Wstaw</GroupName>
        </Group>
        <Group $pad="0 3px 0 5px">
          <GroupBody>
            <Big w={42} icon={<SwatchIcon />} lines={['Koloruj']} caret />
            <Big w={41} icon={<BrushIcon />} lines={['Kopiuj', 'format']} />
            <Big w={68} icon={<TickIcon />} lines={['Zastosuj', 'format do:']} caret />
            <Big w={58} icon={<BoardIcon text="12" green />} lines={['Etykiety', 'liczbowe']} caret />
            <Big w={44} icon={<BoardIcon />} lines={['Etykiety', 'cech']} caret />
            <Big w={62} icon={<BoardIcon text="ab" />} lines={['Etykiety', 'kształtów']} caret />
            <Big w={86} icon={<SyncIcon />} lines={['Aktualizuj', 'etykiety i kolory']} />
            <Big w={56} icon={<AlignIcon />} lines={['Wyrównaj', 'etykiety']} />
            <GroupSplit />
            <Big w={86} icon={<CursorIcon />} lines={['Zaznacz etykiety', 'legendy']} />
            <Big w={86} icon={<MinusIcon />} lines={['Usuwaj etykiety', 'legendy']} />
          </GroupBody>
          <GroupName>Barwy/formatowanie</GroupName>
        </Group>
        <Group>
          <GroupBody>
            <Big w={49} boxed icon={<BallIcon />} lines={['Wykresy']} caret />
          </GroupBody>
        </Group>
        <Group>
          <GroupBody>
            <Big w={46} boxed icon={<BallIcon />} lines={['Łączniki']} caret />
          </GroupBody>
        </Group>
        <Group>
          <GroupBody>
            <Big w={84} icon={<TablePencilIcon />} lines={['Edytor kodów', 'pocztowych']} />
          </GroupBody>
          <GroupName>Kody pocztowe</GroupName>
        </Group>
        <Group>
          <GroupBody>
            <Big w={61} icon={<HelpIcon />} lines={[]} />
          </GroupBody>
          <GroupName>O aplikacji</GroupName>
        </Group>
      </Ribbon>

      <FormulaBar>
        <NameBox aria-label="Pole nazwy" defaultValue="D2" />
        <NameArrow aria-label="Lista nazw"><Triangle /></NameArrow>
        <FunctionArea>
          <Knob />
          <FxButton aria-label="Wstaw funkcję">f<small>x</small></FxButton>
        </FunctionArea>
        <FormulaInput aria-label="Pasek formuły" defaultValue="Cechy" />
        <ExpandButton aria-label="Rozwiń pasek formuły"><ChevronIcon /></ExpandButton>
      </FormulaBar>

      <Workspace>
        <Viewport>
          <Grid>
            <colgroup>
              <col width="26" />
              {columns.map((c) => <col key={c} width={c === 'D' ? 104 : 64} />)}
            </colgroup>
            <thead>
              <tr>
                <Corner />
                {columns.map((c) => <ColHead key={c} $active={c === 'D'}>{c}</ColHead>)}
              </tr>
            </thead>
            <tbody>
              {Array.from({ length: 33 }, (_, i) => i + 1).map((row) => (
                <tr key={row}>
                  <RowHead $active={row === 1}>{row}</RowHead>
                  {columns.map((c) => {
                    const { value, fill, right, flag } = getCell(row, c);
                    return <Cell key={c} $fill={fill} $right={right} $flag={flag}>{value}</Cell>;
                  })}
                </tr>
              ))}
            </tbody>
          </Grid>
          <CopyRange />
          <ActiveCell />
          <PolandMap />
        </Viewport>
        <VerticalBar>
          <SplitGrip />
          <ArrowButton aria-label="W górę"><Triangle dir="up" /></ArrowButton>
          <VerticalThumb aria-label="Przewiń">
            <svg width="8" height="9" viewBox="0 0 8 9"><path d="M0 1.500h8M0 3.500h8M0 5.500h8M0 7.500h8" stroke="#7d8590" /></svg>
          </VerticalThumb>
          <ArrowButton $bottom aria-label="W dół"><Triangle /></ArrowButton>
        </VerticalBar>
      </Workspace>

      <SheetBar>
        <NavButtons>
          <QuickButton aria-label="Pierwszy"><Triangle dir="left" bar /></QuickButton>
          <QuickButton aria-label="Poprzedni"><Triangle dir="left" /></QuickButton>
          <QuickButton aria-label="Następny"><Triangle dir="right" /></QuickButton>
          <QuickButton aria-label="Ostatni"><Triangle dir="right" bar /></QuickButton>
        </NavButtons>
        <SheetTab $active>Arkusz1</SheetTab>
        <SlashEdge from="#fff" to="#e6eaf0" />
        <SheetTab>Arkusz2</SheetTab>
        <SlashEdge from="#e6eaf0" to="#e6eaf0" />
        <SheetTab>Arkusz3</SheetTab>
        <SlashEdge from="#e6eaf0" to="#e6eaf0" />
        <NewSheet aria-label="Wstaw arkusz"><NewSheetIcon /></NewSheet>
        <SlashEdge from="#e6eaf0" to="#dce1ea" />
        <HorizontalBar>
          <SplitGrip $upright />
          <ArrowButton aria-label="W lewo"><Triangle dir="left" /></ArrowButton>
          <HorizontalThumb aria-label="Przewiń w poziomie">
            <svg width="8" height="7" viewBox="0 0 8 7"><path d="M.5 0v7M2.500 0v7M4.500 0v7M6.500 0v7" stroke="#7d8590" /></svg>
          </HorizontalThumb>
          <HorizontalRest />
          <ArrowButton aria-label="W prawo"><Triangle dir="right" /></ArrowButton>
          <SplitGrip $upright />
        </HorizontalBar>
      </SheetBar>

      <StatusBar>
        <StatusText>Wskaż</StatusText>
        <StatusDivider />
        <MacroIcon />
        <StatusDivider />
        <StatusRight>
          <StatusDivider />
          <ViewIcon kind="grid" />
          <ViewIcon kind="page" />
          <ViewIcon kind="break" />
          <Percent>100%</Percent>
          <ZoomControl>
            <RoundButton aria-label="Pomniejsz"><svg width="8" height="2"><path d="M0 1h8" stroke="#a9adb2" strokeWidth="2" /></svg></RoundButton>
            <ZoomSlider type="range" aria-label="Powiększenie" defaultValue="50" />
            <RoundButton aria-label="Powiększ"><svg width="8" height="8"><path d="M0 4h8M4 0v8" stroke="#a9adb2" strokeWidth="2" /></svg></RoundButton>
          </ZoomControl>
        </StatusRight>
        <StartOrb />
      </StatusBar>

      <Dialog role="dialog" aria-label="Wejście" onSubmit={(e) => e.preventDefault()}>
        <DialogTitle>
          Wejście
          <DialogCaption>
            <DialogCaptionButton type="button" aria-label="Pomoc">
              <svg width="9" height="12" viewBox="0 0 9 12">
                <path d="M1.500 4q0-2.500 3-2.500t3 2.300q0 1.200-1.500 2-1.500.7-1.500 2M4.500 9.500v2" fill="none" stroke="#4b5157" strokeWidth="3" />
                <path d="M1.500 4q0-2.500 3-2.500t3 2.300q0 1.200-1.500 2-1.500.7-1.500 2M4.500 9.500v1.500" fill="none" stroke="#fff" strokeWidth="1.400" />
              </svg>
            </DialogCaptionButton>
            <DialogCaptionButton type="button" $close aria-label="Zamknij"><CloseIcon /></DialogCaptionButton>
          </DialogCaption>
        </DialogTitle>
        <DialogBody>
          <DialogLabel htmlFor="range">Podaj zakres z danymi do etykiet</DialogLabel>
          <DialogInput id="range" autoFocus value={range} onChange={(e) => setRange(e.target.value)} />
          <DialogActions>
            <DialogButton type="submit" $primary>OK</DialogButton>
            <DialogButton type="button">Anuluj</DialogButton>
          </DialogActions>
        </DialogBody>
      </Dialog>
    </Window>
  );
};

export default App;
